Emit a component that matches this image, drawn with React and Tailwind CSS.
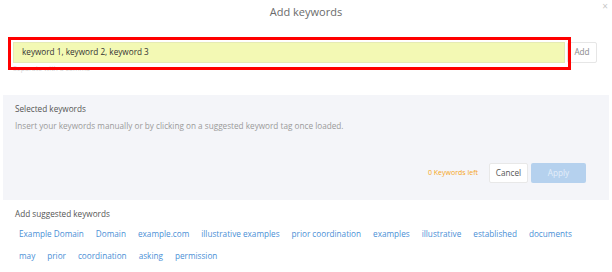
// add keywords modal

const suggested = [
  'Example Domain',
  'Domain',
  'example.com',
  'illustrative examples',
  'prior coordination',
  'examples',
  'illustrative',
  'established',
  'documents',
  'may',
  'prior',
  'coordination',
  'asking',
  'permission',
];

const KeywordTag = ({ label }) => (
  <span className="px-[6px] h-[22px] leading-[22px] text-[8.2px] text-[#4a8fd6] cursor-pointer">
    {label}
  </span>
);

export default function App() {
  return (
    <div className="relative w-[612px] h-[272px] overflow-hidden bg-white font-['Open_Sans',sans-serif]">
      <span className="absolute top-[0px] right-[4px] text-[10px] leading-[12px] text-[#c8c8c8]">×</span>

      {/* header */}
      <div className="pt-[4px] text-center text-[11px] leading-[16px] text-[#6b6b6b]">
        Add keywords
      </div>

      {/* input row */}
      <div className="mt-[22px] flex pl-[13px] gap-[2px]">
        <div className="w-[552px] h-[21px] bg-[#f3f9b4] border border-[#e6ebb4] flex items-center pl-[8px] text-[8.2px] text-[#333]">
          keyword 1, keyword 2, keyword 3
        </div>
        <button className="w-[30px] h-[21px] bg-white border border-[#e6e6e6] rounded-[2px] text-[8.2px] text-[#888]">
          Add
        </button>
      </div>
      <div className="pl-[13px] mt-[1px] text-[7px] leading-[10px] text-[#d4d4d4]">Separate with a comma</div>

      {/* annotation box */}
      <div className="absolute left-[8px] top-[37px] w-[563px] h-[33px] border-[3px] border-[#ff0000]" />

      {/* selected keywords */}
      <div className="mx-[3px] mt-[21px] h-[105px] bg-[#f4f5f9] pl-[12px] pr-[23px] pt-[8px] flex flex-col">
        <div className="text-[8.2px] leading-[12px] text-[#555]">Selected keywords</div>
        <div className="mt-[5px] text-[8.2px] leading-[12px] text-[#9a9a9a]">
          Insert your keywords manually or by clicking on a suggested keyword tag once loaded.
        </div>
        <div className="mt-[31px] flex items-center justify-end">
          <span className="mr-[11px] text-[7px] text-[#f5a623]">0 Keywords left</span>
          <button className="w-[39px] h-[20px] bg-white border border-[#e8e8e8] rounded-[2px] text-[8.2px] text-[#555]">
            Cancel
          </button>
          <button className="ml-[3px] w-[55px] h-[20px] bg-[#b5d1ee] rounded-[2px] text-[8.2px] text-[#e3eefa]">
            Apply
          </button>
        </div>
      </div>

      {/* suggestions */}
      <div className="mt-[8px] pl-[15px] text-[8.2px] leading-[12px] text-[#555]">Add suggested keywords</div>
      <div className="mt-[3px] pl-[13px] w-[595px] flex flex-wrap">
        {suggested.map((s) => (
          <KeywordTag key={s} label={s} />
        ))}
      </div>
    </div>
  );
}
